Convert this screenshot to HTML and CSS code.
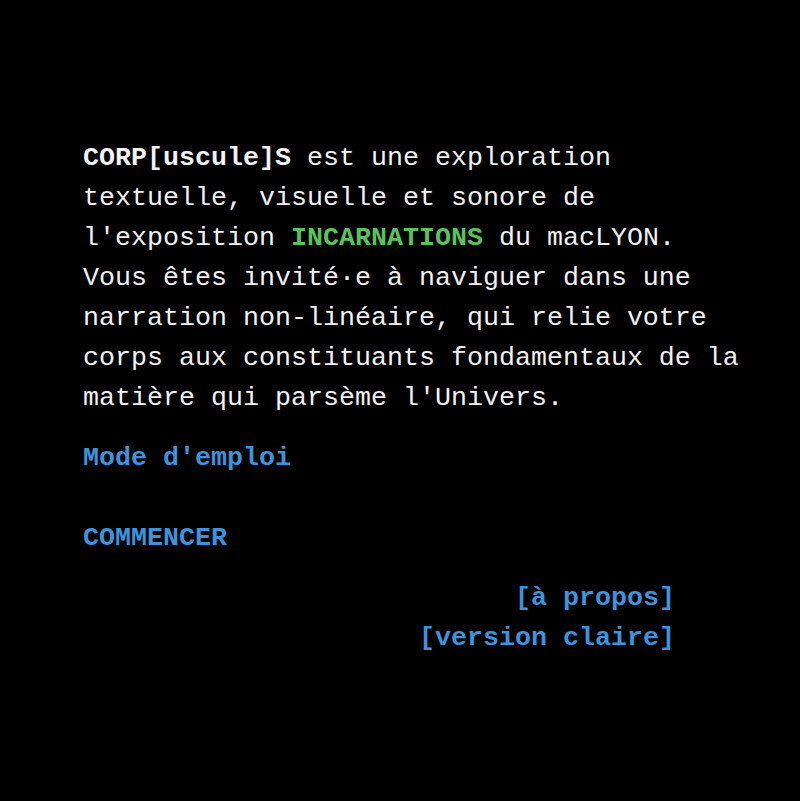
FILE: index.html
```html
<!DOCTYPE html>
<html lang="fr">
<head>
<meta charset="utf-8">
<title>CORP[uscule]S</title>
<link rel="stylesheet" href="styles.css">
</head>
<body>
<main class="page">
  <p class="intro"><strong>CORP[uscule]S</strong> est une exploration textuelle, visuelle et sonore de l'exposition <strong class="green">INCARNATIONS</strong> du macLYON.<br>Vous êtes invité·e à naviguer dans une narration non-linéaire, qui relie votre corps aux constituants fondamentaux de la matière qui parsème l'Univers.</p>
  <a class="link mode" href="#">Mode d'emploi</a>
  <a class="link start" href="#">COMMENCER</a>
  <nav class="extra">
    <a class="link" href="#">[à propos]</a>
    <a class="link" href="#">[version claire]</a>
  </nav>
</main>
</body>
</html>
```
FILE: styles.css
```css
html, body {
  margin: 0;
  padding: 0;
  background: #000;
}
body {
  width: 800px;
  height: 801px;
  overflow: hidden;
  font-family: "Liberation Mono", "Courier New", monospace;
  font-size: 26.67px;
  line-height: 40px;
  color: #f2f2f2;
}
.page {
  display: flex;
  flex-direction: column;
  align-items: flex-start;
  padding: 138px 0 0 83px;
  width: 680px;
}
.intro {
  margin: 0;
  width: 680px;
}
.intro strong {
  font-weight: bold;
}
.green {
  color: #5cc15c;
}
.link {
  color: #3d93dc;
  font-weight: bold;
  text-decoration: none;
}
.mode {
  margin-top: 20px;
}
.start {
  margin-top: 40px;
}
.extra {
  margin-top: 20px;
  width: 592px;
  display: flex;
  flex-direction: column;
  align-items: flex-end;
}
```
